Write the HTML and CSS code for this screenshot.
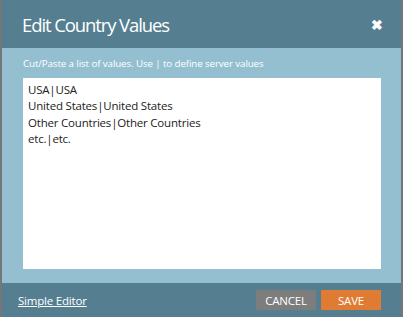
FILE: index.html
```html
<!DOCTYPE html>
<html>
<head>
    <meta charset="UTF-8">
    <title>Edit Country Values</title>
    <link rel="stylesheet" href="styles.css">
</head>
<body>
    <div class="dialog">
        <div class="dialog-header">
            <h1>Edit Country Values</h1>
            <span class="close">&#10006;</span>
        </div>
        <div class="dialog-body">
            <p class="hint">Cut/Paste a list of values. Use | to define server values</p>
            <div class="values">
                <div>USA|USA</div>
                <div>United States|United States</div>
                <div>Other Countries|Other Countries</div>
                <div>etc.|etc.</div>
            </div>
        </div>
        <div class="dialog-footer">
            <a class="simple-link" href="#">Simple Editor</a>
            <div class="actions">
                <button class="btn btn-cancel">CANCEL</button>
                <button class="btn btn-save">SAVE</button>
            </div>
        </div>
    </div>
</body>
</html>
```

FILE: styles.css
```css
html, body {
    margin: 0;
    padding: 0;
    height: 100%;
}
body {
    font-family: "Open Sans", Arial, sans-serif;
    background-color: #73777a;
}
.dialog {
    margin: 0 2px;
    height: 317px;
    display: flex;
    flex-direction: column;
}
.dialog-header {
    background-color: #557f91;
    height: 48px;
    display: flex;
    align-items: center;
    justify-content: space-between;
    padding: 0 18px 0 20px;
}
.dialog-header h1 {
    margin: 0;
    color: #fff;
    font-size: 18.5px;
    font-weight: normal;
    letter-spacing: -1.1px;
}
.close {
    color: #fff;
    font-size: 14px;
    font-weight: bold;
}
.dialog-body {
    background-color: #94bfd0;
    flex: 1;
    padding: 9px 20px 14px 21px;
    display: flex;
    flex-direction: column;
}
.hint {
    margin: 0 0 8px;
    color: #fff;
    font-size: 9.75px;
    letter-spacing: -0.1px;
}
.values {
    flex: 1;
    background: #fff;
    padding: 4px 5px 3px;
    font-size: 11.5px;
    line-height: 16.3px;
    letter-spacing: -0.2px;
    color: #222;
}
.dialog-footer {
    background-color: #557f91;
    height: 34px;
    display: flex;
    align-items: center;
    justify-content: space-between;
    padding: 0 20px 0 16px;
}
.simple-link {
    color: #fff;
    font-size: 11.5px;
    letter-spacing: -0.2px;
}
.actions {
    display: flex;
    gap: 5px;
}
.btn {
    width: 60px;
    height: 20px;
    border: none;
    color: #fff;
    font-family: "Open Sans", Arial, sans-serif;
    font-size: 11.5px;
    padding: 0;
    letter-spacing: -0.2px;
}
.btn-cancel {
    background-color: #7d7d7d;
}
.btn-save {
    background-color: #e07b33;
}
```
